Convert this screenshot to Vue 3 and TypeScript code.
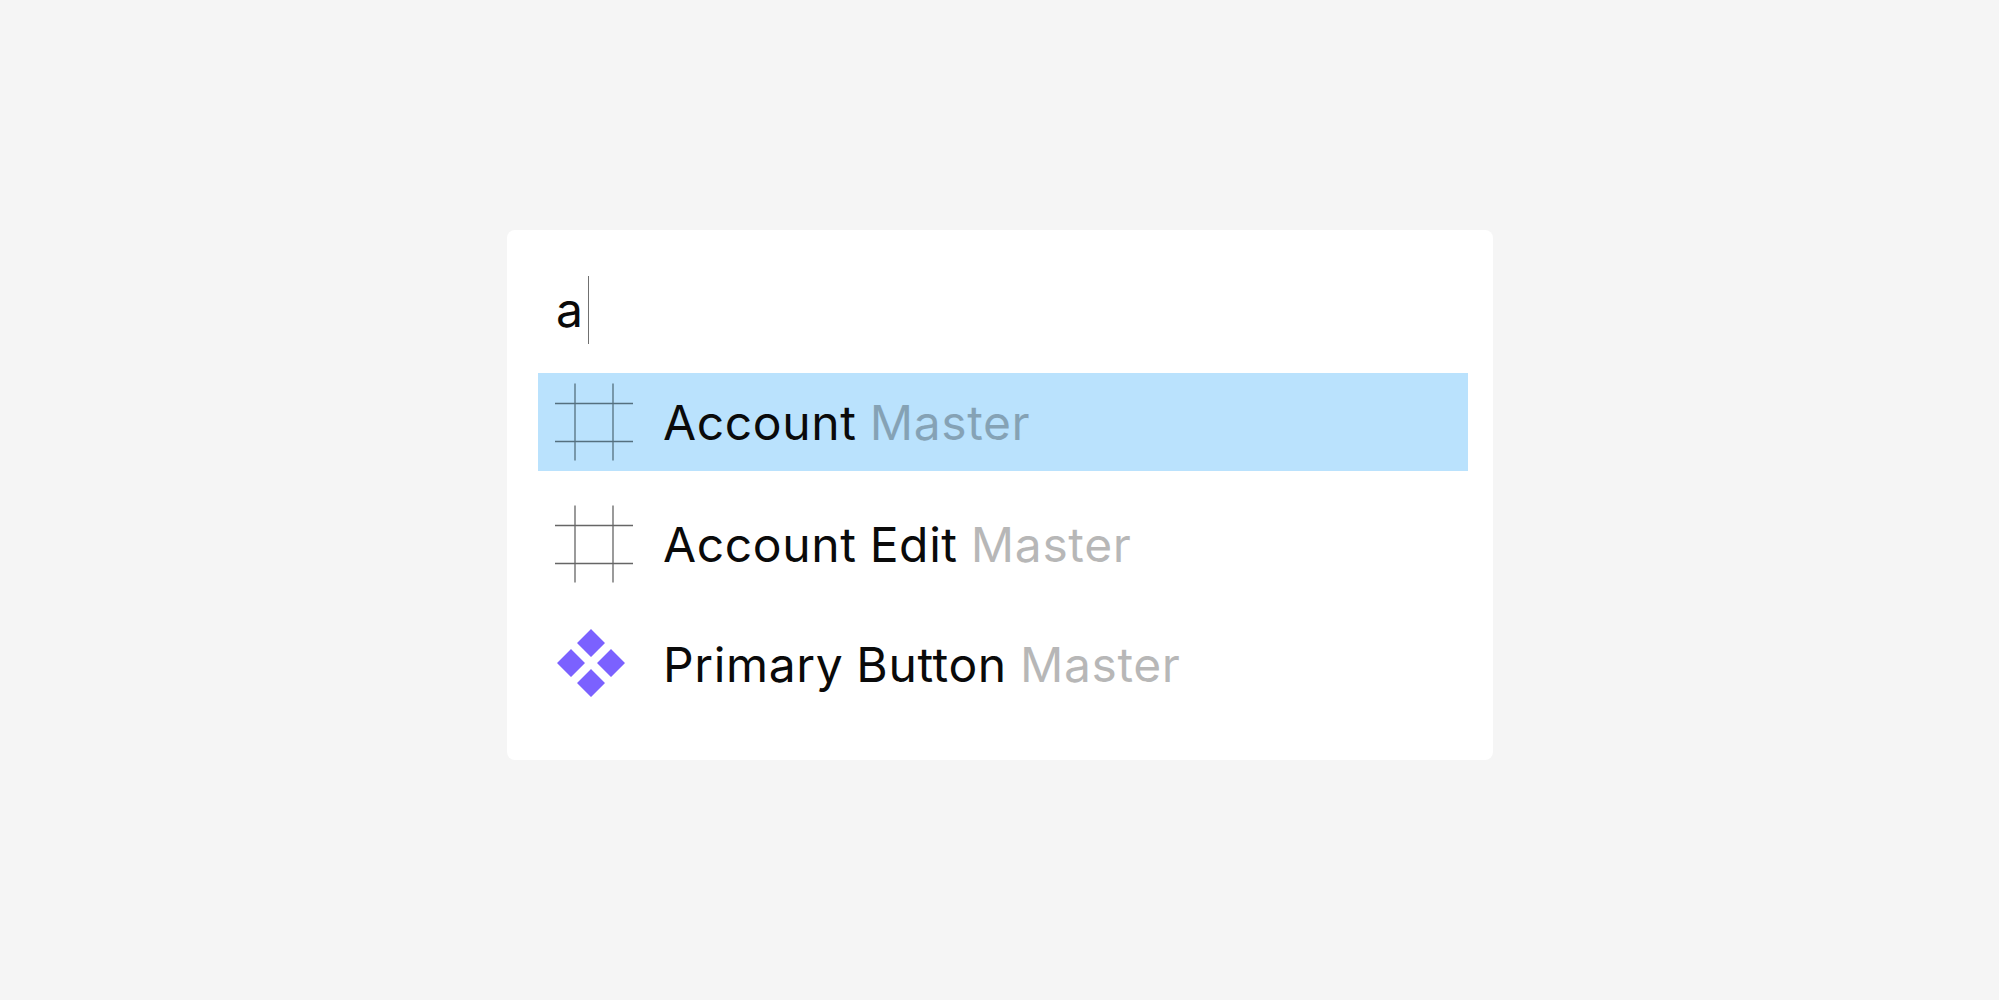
<script setup lang="ts">
const rows = [
  { name: 'Account', icon: 'frame', selected: true },
  { name: 'Account Edit', icon: 'frame', selected: false },
  { name: 'Primary Button', icon: 'component', selected: false },
]
</script>

<template>
  <main class="page">
    <section class="card">
      <div class="query"><span>a</span><i class="caret"></i></div>
      <ul class="list">
        <li v-for="row in rows" :key="row.name" class="row" :class="{ selected: row.selected }">
          <svg v-if="row.icon === 'frame'" class="icon" viewBox="0 0 80 80" width="80" height="80">
            <path d="M21 1.5V78.500M59 1.500V78.500M1 21.500H79M1 59.500H79" fill="none" stroke="currentColor" stroke-width="1.300" />
          </svg>
          <svg v-else class="icon" viewBox="0 0 80 80" width="80" height="80">
            <path fill="#7b61ff" d="M37 7 51 21 37 35 23 21ZM17 27 31 41 17 55 3 41ZM57 27 71 41 57 55 43 41ZM37 47 51 61 37 75 23 61Z" />
          </svg>
          <span class="label">{{ row.name }} <span class="kind">Master</span></span>
        </li>
      </ul>
    </section>
  </main>
</template>

<style scoped>
.page {
  min-height: 1000px;
  box-sizing: border-box;
  padding: 230px 0 0 507px;
  background: #f5f5f5;
  font-family: Inter, "Liberation Sans", sans-serif;
  font-weight: 380;
  letter-spacing: 0.62px;
  word-spacing: -1px;
  color: #0a0a0a;
}
.card {
  width: 986px;
  height: 530px;
  box-sizing: border-box;
  padding: 46px 25px 0 31px;
  background: #fff;
  border-radius: 8px;
}
.query {
  height: 97px;
  display: flex;
  align-items: flex-start;
  padding-left: 18px;
  font-size: 48px;
  line-height: 68px;
}
.caret {
  width: 1.300px;
  height: 68px;
  margin-left: 4px;
  background: #707070;
}
.list {
  list-style: none;
  margin: 0;
  padding: 0;
}
.row {
  height: 98px;
  display: flex;
  align-items: center;
  gap: 29px;
  margin-bottom: 24px;
  padding-left: 16px;
  font-size: 48px;
  color: #666;
}
.row:nth-child(3) {
  margin-top: -4px;
}
.row:nth-child(3) .label {
  padding-top: 4px;
}
.row.selected {
  background: #bae2fd;
  color: #55707f;
}
.icon {
  flex: none;
}
.label {
  color: #0a0a0a;
  white-space: nowrap;
}
.kind {
  color: #000;
  opacity: 0.28;
}
</style>
